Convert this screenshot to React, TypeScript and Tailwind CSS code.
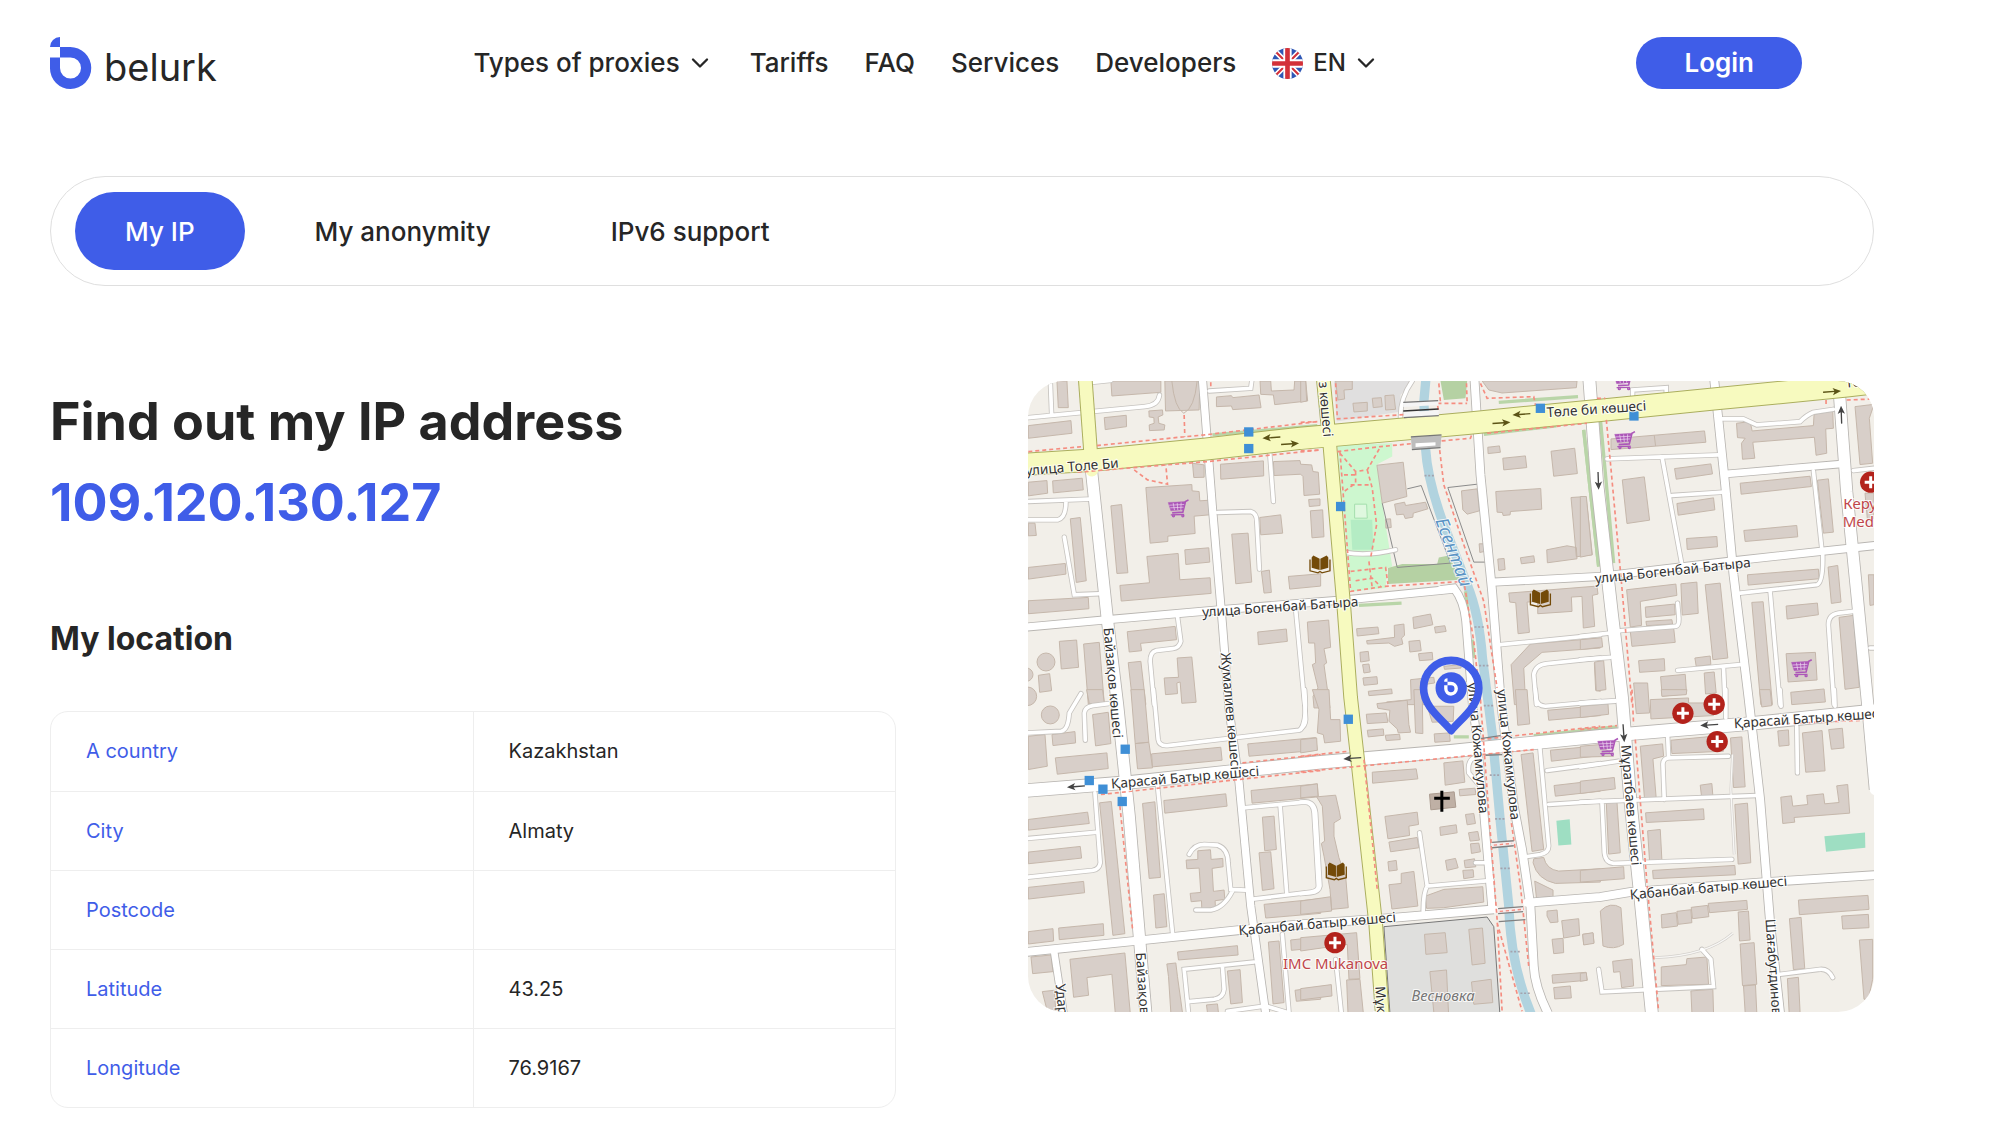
import { ReactNode } from 'react';
import { ChevronDown } from 'lucide-react';

const NAV_LINKS = ['Tariffs', 'FAQ', 'Services', 'Developers'];

const TABS = ['My IP', 'My anonymity', 'IPv6 support'];

const LOCATION = [
  { label: 'A country', value: 'Kazakhstan' },
  { label: 'City', value: 'Almaty' },
  { label: 'Postcode', value: '' },
  { label: 'Latitude', value: '43.25' },
  { label: 'Longitude', value: '76.9167' },
];

const LOGO_PATH =
  'M10 0V10H0A10 10 0 0 1 10 0ZM10 10H20A21 21 0 0 1 20.5 52A20.5 20.5 0 0 1 0 31.5V20.5H10V31A10.5 10.5 0 0 0 31 31A10.5 10.5 0 0 0 20.5 20.5H10Z';

// The map is split in six tiles, every shape uses its own tile's coordinates
const TILES = [
  {
    id: 'a',
    x: -21,
    y: -18,
    buildings:
      'M108 18L138 18L142 98L112 98Z M22 152L150 137L153 175L22 190Z M250 128L316 121L317 155L253 164Z M384 108L425 105L426 120L412 126L414 145L432 150L430 165L386 167L385 150L400 145L399 128L385 126Z M270 18L420 18L420 52L273 63Z M432 18L537 18L535 105L434 108Z M587 66L632 62L636 68L715 60L721 98L636 104L632 93L587 95Z M718 18L750 18L752 48L820 45L822 18L855 18L861 78L762 89L758 60L720 58Z M515 265L550 270L550 307L519 308Z M599 268L728 258L729 303L600 313Z M758 260L838 257L840 268L873 270L877 290L893 292L897 358L850 362L847 305L840 298L760 302Z M864 374L898 372L898 392L866 395Z M22 322L78 317L80 355L22 363Z M95 318L184 310L187 345L97 354Z M22 445L42 445L46 482L22 483Z M148 432L178 428L196 618L166 623Z M270 393L302 389L321 594L288 596Z M375 338L513 329L514 348L535 350L537 378L566 376L566 420L520 424L523 476L441 484L441 500L388 505Z M492 525L564 519L567 562L495 569Z M378 545L472 536L477 615L568 609L571 656L301 679L297 632L386 624Z M633 478L682 475L693 622L645 627Z M717 428L780 420L786 475L720 480Z M722 590L746 586L752 653L730 655Z M803 605L900 597L900 634L807 643Z M22 578L133 566L135 598L22 613Z M22 678L202 668L204 702L22 717Z M319 771L463 755L467 795L359 806L362 828L325 832Z M711 772L797 763L800 800L713 810Z M115 800L167 796L173 878L121 883Z M188 808L235 803L250 985L202 988Z M52 902L86 897L92 948L56 953Z M322 864L360 860L375 990L336 990Z M430 910L473 908L469 850L513 847L526 983L483 986L478 922L468 925L470 957L434 960Z M102 862A27 27 0 1 1 48 862A27 27 0 1 1 102 862Z M36 900A20 20 0 1 1 -4 900A20 20 0 1 1 36 900Z M47 965A28 28 0 1 1 -9 965A28 28 0 1 1 47 965Z',
    roads:
      'M22 128L370 95Q412 92 416 60 M88 18L92 120 M22 380L205 373 M22 435L110 435Q135 430 135 380 M130 487L160 660L235 657 M565 48L690 40L693 18 M747 235L758 380 M590 413L690 410Q708 415 708 440L716 583 M470 725L480 800Q475 820 455 822L405 828Q388 832 388 860L400 990 M825 705L852 990 M213 22L270 16',
    strips: 'M575 180L890 152',
    paths:
      'M22 230L185 215 M228 212L495 185L550 180L890 140 M170 292L560 260L900 225 M490 120L492 185 M340 285L380 315L440 328L435 270 M570 22V40',
  },
  {
    id: 'b',
    x: 819,
    y: -18,
    buildings:
      'M0 18L15 18L18 78L0 82Z M105 18L155 18L155 43L130 45L132 72L112 75Z M157 85L200 82L200 108L160 111Z M215 70L242 68L245 95L218 98Z M253 62L280 60L285 103L255 105Z M545 18L830 18L828 38L605 54L565 45Z M562 217L597 213L600 232L563 236Z M607 250L675 243L679 278L610 285Z M752 229L823 220L831 296L760 304Z M586 350L721 341L724 403L630 410L629 420L608 422L606 413L590 412Z M483 348L530 342L537 408L500 418L487 405Z M812 368L857 365L876 540L828 546Z M739 525L800 513L828 518L830 552L741 564Z M660 549L700 543L703 562L663 567Z M592 553L611 551L614 584L595 587Z M536 507L550 507L552 530L538 533Z M229 271L308 262L319 365L245 385Z M282 388L312 382L315 392L375 382L382 402L338 415L337 427L314 431L309 418L288 420Z M255 433L270 432L272 458L256 460Z M29 408L66 405L70 486L34 489Z M625 655L890 634L893 658L876 662L883 755L849 760L845 665L813 667L815 710L712 717L712 680L680 682L687 773L653 777L646 684L628 682Z M337 728L390 718L397 750L340 762Z M402 757L433 753L437 770L405 775Z M281 752L310 748L312 782L303 790L307 808L282 815L265 805L200 808L198 798L282 788Z M168 762L232 757L235 777L170 784Z M325 800L358 797L362 828L328 832Z M354 837L395 833L397 855L357 858Z M178 833L203 830L206 858L180 862Z M186 870L205 868L209 892L190 895Z M187 910L229 906L231 928L190 932Z M203 950L273 943L275 957L205 963Z M20 742L84 736L90 818L70 822L78 865L70 870L88 1000L40 1000L37 965L52 940L35 870L45 865L42 805L24 805Z M632 870L690 808L900 790L900 820L725 833L670 880L676 990L642 990Z M882 865L900 862L900 950L886 947Z M330 915L400 908L402 925L370 930L375 990L260 990L258 982L332 975Z M430 875L480 870L482 880L432 884Z',
    roads:
      'M300 130Q298 70 335 18 M135 533Q200 545 285 525 M600 810L900 780 M708 990L700 900Q705 870 740 867L900 850',
    strips:
      'M595 82L833 65 M550 178L768 153 M850 165L895 575 M175 692L303 685 M495 650L505 740 M515 795L520 850',
    paths:
      'M0 142L50 140 M108 132L415 112L410 85L500 85 M415 25L420 85 M498 25L500 85 M0 228L60 225 M110 230L240 215L510 190L515 175 M415 205L430 330L490 510L550 680L590 940 M105 25L110 130 M118 230L150 650L250 635L490 620L520 800L540 985 M118 235L165 290L200 285L240 215 M165 290L165 325L130 350 M200 285L215 340L228 450L210 550 M130 300L165 300 M150 330L210 330 M150 590L255 578L262 628 M165 618L215 610L240 635 M205 560L215 640 M540 25L560 70L700 65L705 90 M560 175L860 145',
  },
  {
    id: 'c',
    x: 1659,
    y: -18,
    buildings:
      'M0 365L18 365L35 540L0 547Z M92 192L373 168L377 202L92 224Z M222 181L226 213 M126 315L192 306L208 436L140 446Z M283 281L392 267L397 297L288 313Z M290 386L400 369L404 405L294 421Z M319 491L410 485L412 516L321 524Z M469 145L510 140L516 168L700 152L702 118L758 108L760 160L737 162L740 235L708 241L703 187L518 202L524 250L487 253L484 205L495 190L472 188Z M480 325L690 304L694 335L483 358Z M491 467L650 452L653 486L495 500Z M712 316L745 312L760 472L730 475Z M825 95L882 88L868 130L878 265L840 269Z M502 600L715 583L717 612L504 631Z M744 577L773 572L783 682L754 686Z M618 694L712 685L715 720L621 733Z M139 645L287 628L290 662L180 680L184 752L150 757Z M195 697L283 688L285 720L197 728Z M197 740L275 735L277 748L199 753Z M302 627L350 622L354 716L306 721Z M375 630L420 625L443 850L398 855Z M150 770L280 757L285 803L155 815Z M175 858L252 852L254 888L178 893Z M344 850L390 844L392 870L348 875Z M515 683L549 681L577 990L542 990Z M618 837L706 833L711 916L624 922Z M632 953L732 943L736 982L635 990Z M777 728L820 722L838 938L795 944Z M241 906L315 899L319 957L246 965Z M372 895L402 892L408 955L376 958Z M0 795L64 789L67 817L0 825Z M43 862L70 858L77 945L48 949Z M865 600L882 600L882 690L870 692Z M855 355L882 355L882 430L862 432Z',
    roads:
      'M157 60L157 45L258 38L258 55 M80 252L415 240 M245 245L305 570 M275 362L430 352 M425 132L490 132L530 150L660 140Q680 120 700 112L760 103 M700 288L725 520 M480 655L710 630Q730 625 728 540 M570 650L600 990 M118 768L285 755Q297 755 296 730L292 685 M292 887L480 870 M430 880L435 990 M820 710L775 715Q745 720 745 750L762 990 M0 785L115 772 M0 855L90 848 M820 287L882 280 M870 820L882 820 M0 985L105 978',
    strips: 'M10 165L55 575 M60 130L100 565',
    paths: 'M78 135L90 260L125 640L155 990 M800 75L880 72 M738 75V90 M50 70H75',
  },
  {
    id: 'd',
    x: -21,
    y: 927,
    buildings:
      'M22 140L72 135L79 230L22 240Z M93 135L162 126L164 160L96 168Z M103 205L258 190L262 237L109 254Z M197 0L245 0L250 40L205 42Z M215 75L262 68L270 162L224 169Z M330 0L370 0L384 158L343 162Z M343 162L384 158L395 235L350 238Z M392 193L600 173L604 212L395 232Z M681 163L885 144L890 182L685 200Z M22 390L200 368L205 402L22 422Z M22 488L178 471L182 506L22 523Z M22 594L188 576L191 610L22 629Z M22 727L96 718L98 755L22 764Z M113 716L247 703L249 738L115 751Z M236 340L271 336L312 733L276 738Z M365 342L402 337L419 564L385 567Z M398 617L430 613L438 712L405 716Z M429 333L615 313L619 350L432 371Z M691 303L890 283L893 322L694 341Z M725 383L760 380L767 480L732 484Z M715 490L750 487L760 598L725 603Z M531 484L569 481L571 510L606 507L607 532L574 537L578 606L610 602L612 630L583 634L584 655L543 658L542 634L511 637L508 612L540 609L535 536L498 538L496 512L531 510Z M730 645L900 628L900 672L735 686Z M30 803L90 797L96 847L35 853Z M147 810L312 791L328 970L283 970L273 855L198 865L203 918L158 924Z M64 907L100 903L105 970L80 970Z M470 788L650 769L652 797L473 812Z M438 824L465 821L470 862L485 970L450 970L443 862Z M620 845L658 841L665 940L630 944Z M743 758L775 755L790 940L757 944Z M810 752L900 742L900 775L812 783Z M823 903L900 893L900 930L827 936Z M557 947L590 944L593 970L560 970Z M115 76A27 27 0 1 1 61 76A27 27 0 1 1 115 76Z',
    roads:
      'M22 130L120 125Q142 122 145 70L180 12 M193 152L190 70Q192 52 215 48L262 42 M398 0L412 150Q415 170 440 168L835 122Q855 110 855 90L850 0 M222 310L238 520Q235 540 215 543L22 563 M22 447L230 428 M410 290L455 730 M668 355L850 338Q878 338 880 370L893 590Q893 605 870 608L690 630 M778 345L798 610 M505 495Q520 465 550 465L590 467Q622 478 622 520L630 600L675 602 M635 605Q610 655 570 662L525 662 M700 818L490 840L503 970 M605 832L610 900Q608 925 580 930L503 937 M785 735L805 970 M620 966L735 950L800 970',
    strips: '',
    paths: 'M240 315L900 243 M665 220L900 195 M297 350L335 720',
  },
  {
    id: 'e',
    x: 819,
    y: 927,
    buildings:
      'M197 74L257 70L262 98L200 102Z M229 42L320 32L325 105L330 128L293 130L290 118L265 95L268 62L232 56Z M200 122L248 118L250 137L203 142Z M254 137L297 134L299 150L257 153Z M340 0L365 0L367 132L345 130Z M380 50L460 50L458 95L395 98Z M401 133L447 130L449 155L403 158Z M0 150L48 145L50 182L0 190Z M35 0L85 0L90 90L118 90L120 155L72 160L68 135L50 130L55 60Z M645 0L680 0L688 103L652 107Z M742 62L900 48L900 78L745 92Z M215 248L347 238L352 268L216 281Z M430 220L487 214L493 278L434 287Z M476 300L524 296L526 315L478 319Z M253 381L350 368L354 405L325 410L327 438L262 448Z M265 458L350 444L355 475L270 487Z M495 375L520 372L525 402L500 406Z M418 413L467 406L470 430L420 438Z M504 430L532 426L537 452L509 455Z M510 463L535 461L540 487L513 492Z M491 513L522 508L526 532L494 535Z M435 513L465 507L473 535L440 543Z M487 543L518 541L520 563L490 568Z M262 517L287 513L290 542L265 545Z M265 586L302 582L302 552L340 546L352 650L274 659Z M375 620L430 600L547 592L550 638L430 655L378 657Z M662 195L698 190L730 480L695 486Z M750 182L900 168L900 198L753 215Z M761 288L900 272L900 305L765 320Z M700 508L730 504Q738 540 775 545L900 538L900 578L765 582Q710 570 698 520Z M703 575L758 602L758 622L708 625Z M740 665L770 662L773 698L750 700L740 680Z M784 694L835 688L838 738L790 746Z M755 750L788 747L790 790L760 793Z M847 735L878 731L881 760L850 765Z M755 857L857 849L861 873L757 882Z M760 895L810 890L813 926L763 929Z M48 322L105 317L117 370L120 388L100 400L100 440L115 505L135 560L143 655L93 660L88 600L70 500L62 462L72 455L65 350Z M0 635L90 622L93 665L0 675Z M0 290L50 283L52 320L0 325Z M0 745L168 730L178 868L145 870L140 765L0 785Z M0 898L92 886L94 920L0 932Z M138 872L178 870L188 970L142 970Z M372 735L434 730L440 790L376 795Z M505 720L546 716L554 822L515 827Z M388 847L438 842L444 970L400 970Z M513 878L572 870L577 940L520 945Z',
    roads:
      'M357 430L380 590L575 573 M380 590Q368 610 368 665 M525 520L560 520 M740 243L900 222 M745 345L900 335 M718 170L745 470Q745 490 720 495L675 502 M705 0L708 30Q712 48 735 50L900 35 M0 338Q40 330 45 370L58 590Q55 608 30 610L0 613 M520 205Q500 215 505 250L530 280 M105 810L122 970 M0 120Q20 90 12 0',
    strips: 'M460 142L505 142 M700 138L900 118',
    paths:
      'M0 200L145 185 M0 247L700 180 M190 210L230 600 M540 30L565 370L590 690L605 966 M630 380L660 590L685 830 M590 700L665 966 M540 150L900 110',
  },
  {
    id: 'f',
    x: 1659,
    y: 927,
    buildings:
      'M0 50L83 43L85 74L0 84Z M0 170L60 165L100 200L0 203Z M0 275L102 264L105 298L0 312Z M78 341L110 337L120 490L85 494Z M0 543L130 532L132 568L0 578Z M180 170L247 163L250 200L218 208L228 328L193 331Z M272 152L420 138L430 185L275 192Z M451 145L485 142L495 292L460 294Z M360 287L395 282L398 318L364 321Z M464 345L502 341L512 520L474 524Z M196 370L370 358L372 390L198 399Z M202 424L240 420L245 513L208 518Z M217 543L464 528L466 556L219 568Z M593 124L625 121L627 167L597 170Z M667 130L726 123L735 244L677 248Z M746 120L787 116L792 175L754 179Z M602 323L634 319L638 350L683 345L680 318L730 313L734 343L777 339L770 289L803 285L809 371L642 384L644 398L608 402Z M655 632L864 618L867 660L658 676Z M785 680L865 675L867 715L788 719Z M60 665Q90 635 122 655L130 765Q100 783 68 770Z M7 735L38 730L41 762L10 767Z M97 816L155 809L160 890L124 895L119 847L100 849Z M0 852L18 850L20 873L0 876Z M243 676L288 670L292 710L245 716Z M290 666L332 661L335 700L294 705Z M333 654L382 648L386 682L337 688Z M384 642L500 633L502 660L388 670Z M474 668L505 665L510 752L478 755Z M480 764L522 760L530 885L487 889Z M490 890L526 887L530 970L495 970Z M243 833L318 826L320 808L380 803L385 885L243 889Z M332 905L398 900L400 970L335 970Z M628 688L663 684L674 838L640 841Z M622 868L655 864L660 970L627 970Z M838 752L878 750L878 870L865 930L852 930Z M160 -20L202 -20L208 70L168 72Z M210 30L325 25L325 40L395 40L400 78L212 88Z M243 0L320 0L318 15L245 20Z M538 0L570 0L575 48L545 52Z',
    roads:
      'M0 42L105 35 M0 232L115 215 M0 338L530 318 M262 135L265 200 M445 200L265 205Q248 207 248 225L252 330 M65 340L72 490Q75 520 100 522L455 510 M650 110L652 250 M437 0L437 85 M600 0L603 50 M763 0L765 50 M55 840L65 908L400 892L392 810L365 780 M600 855L720 840Q745 838 758 865',
    strips: 'M0 122L110 112',
    paths: 'M155 0L160 105 M165 150L200 580L235 966 M0 120L110 108 M555 105L850 92',
  },
];

const STREETS = [
  { d: 'M191 272L239 722L269 972L304 1307L336 1687L354 1900', width: 34 },
  { d: 'M524 -5L554 382L584 732L604 987L634 1207L669 1577L714 1900', width: 22 },
  { d: 'M1341 -5L1359 282L1394 632L1419 950L1459 1277L1484 1407L1509 1577L1519 1757Q1522 1820 1562 1900', width: 24 },
  { d: 'M1240 627L1279 622Q1309 660 1315 720L1335 972L1349 1077L1369 1297L1394 1587', width: 22 },
  { d: 'M1686 -5L1709 302L1754 702L1784 950L1809 1257L1839 1547L1874 1900', width: 36 },
  { d: 'M2061 -5L2094 312L2119 582L2164 950L2199 1257L2229 1627L2259 1900', width: 24 },
  { d: 'M2434 -5L2459 332L2489 632L2521 960L2545 1227', width: 34 },
  { d: 'M-5 739L259 715L579 687L979 655L1279 625', width: 22 },
  { d: 'M1399 604L1719 587L2119 540L2545 494', width: 22 },
  { d: 'M2099 279L2434 250', width: 20 },
  { d: 'M-5 1230L309 1205L639 1170L879 1145L1269 1112L1719 1067L2159 1030L2545 990', width: 38 },
  { d: 'M-5 1715L319 1682L629 1650L819 1632L1099 1612L1399 1587', width: 24 },
  { d: 'M1499 1567L1719 1550L1809 1535L2219 1505L2545 1484', width: 24 },
  { d: 'M79 1717L107 1900', width: 20 },
];

const AVENUES = [
  { d: 'M172 -5L192 268', width: 38 },
  { d: 'M887 -5L907 197L949 682L969 950L989 1127L1044 1627L1064 1900', width: 38 },
  { d: 'M-5 250L192 238L529 205L819 172L1319 127L1719 88L2059 54L2459 15L2545 5', width: 64 },
];

const RIVER =
  'M1195 -5L1189 62L1194 202Q1200 300 1249 432L1319 612Q1355 700 1365 832L1394 1057L1419 1327L1444 1577Q1450 1760 1515 1910';

const STREET_LABELS = [
  { text: 'улица Толе Би', x: -6, y: 284, angle: -5 },
  { text: 'улица Богенбай Батыра', x: 524, y: 709, angle: -4 },
  { text: 'улица Богенбай Батыра', x: 1704, y: 608, angle: -6 },
  { text: 'Төле би көшесі', x: 1559, y: 109, angle: -4 },
  { text: 'Төле би', x: 2456, y: 20, angle: -5 },
  { text: 'Қарасай Батыр көшесі', x: 251, y: 1224, angle: -5 },
  { text: 'Қарасай Батыр көшесі', x: 2121, y: 1043, angle: -4 },
  { text: 'Қабанбай батыр көшесі', x: 634, y: 1665, angle: -5 },
  { text: 'Қабанбай батыр көшесі', x: 1809, y: 1557, angle: -5 },
  { text: 'Байзақов көшесі', x: 227, y: 742, angle: 85 },
  { text: 'Байзақов көшесі', x: 324, y: 1717, angle: 86 },
  { text: 'Жумалиев көшесі', x: 579, y: 817, angle: 85 },
  { text: 'з көшесі', x: 873, y: 3, angle: 85 },
  { text: 'Мұқанов', x: 1043, y: 1819, angle: 86 },
  { text: 'улица Кожамкулова', x: 1321, y: 907, angle: 85 },
  { text: 'улица Кожамкулова', x: 1409, y: 927, angle: 84 },
  { text: 'Мұратбаев көшесі', x: 1781, y: 1094, angle: 85 },
  { text: 'Шағабутдинов', x: 2215, y: 1617, angle: 86 },
  { text: 'Удар', x: 83, y: 1812, angle: 85 },
];

const BUS_STOPS = [
  [663, 153], [663, 203], [939, 377], [1539, 82], [1820, 105],
  [292, 1106], [184, 1200], [225, 1226], [283, 1263], [962, 1016],
];

// Direction arrows: tip position and heading
const ARROWS = [
  { x: 704, y: 172, angle: 176, color: '#5b5316' },
  { x: 814, y: 187, angle: -4, color: '#5b5316' },
  { x: 1449, y: 124, angle: -4, color: '#5b5316' },
  { x: 1455, y: 102, angle: 176, color: '#5b5316' },
  { x: 2442, y: 30, angle: -4, color: '#5b5316' },
  { x: 1714, y: 327, angle: 88, color: '#444' },
  { x: 2442, y: 74, angle: -92, color: '#444' },
  { x: 117, y: 1220, angle: 176, color: '#444' },
  { x: 947, y: 1135, angle: 176, color: '#444' },
  { x: 2019, y: 1035, angle: 176, color: '#444' },
  { x: 1791, y: 1085, angle: 86, color: '#444' },
];

const SHOPS = [
  [451, 382], [1792, 177], [1790, 0], [2323, 862], [1741, 1099],
];

const LIBRARIES = [
  [877, 550], [1539, 652], [926, 1472],
];

const HOSPITALS = [
  [2531, 304], [2061, 971], [1967, 998], [2070, 1083], [922, 1687],
];

function Logo() {
  return (
    <a href="#" className="flex items-center gap-3" aria-label="belurk">
      <svg width="42" height="52" viewBox="0 0 42 52" fill="#3f5de8">
        <path d={LOGO_PATH} />
      </svg>
      <span className="pt-2 text-[38px] leading-10 text-[#262626]">belurk</span>
    </a>
  );
}

function UkFlag() {
  return (
    <svg width="31" height="31" viewBox="0 0 60 60">
      <clipPath id="flag-circle">
        <circle cx="30" cy="30" r="30" />
      </clipPath>
      <g clipPath="url(#flag-circle)">
        <rect width="60" height="60" fill="#2f57b5" />
        <path d="M0 0L60 60M60 0L0 60" stroke="#fff" strokeWidth="10" />
        <path d="M0 0L60 60M60 0L0 60" stroke="#d33139" strokeWidth="4" />
        <path d="M30 0V60M0 30H60" stroke="#fff" strokeWidth="16" />
        <path d="M30 0V60M0 30H60" stroke="#d33139" strokeWidth="9" />
      </g>
    </svg>
  );
}

function Tile({ x, y, children }: { x: number; y: number; children: ReactNode }) {
  return <g transform={`translate(${x} ${y})`}>{children}</g>;
}

function LocationMap() {
  return (
    <svg
      className="block h-auto w-full rounded-[36px]"
      viewBox="0 0 2541 1896"
      role="img"
      aria-label="Map of Almaty"
      fontFamily="'Noto Sans', sans-serif"
    >
      <rect width="2541" height="1896" fill="#f2efe9" />

      {/* Parks and land use */}
      <Tile x={819} y={-18}>
        <path d="M100 18L335 18L300 60L298 110L108 140Z" fill="#e0dfdf" />
        <path d="M110 210L275 205L275 245L230 268L245 385L275 575L260 580L255 640L150 650Z" fill="#cdf7cf" />
        <path d="M150 435H215L218 525H155Z" fill="#b4ecc4" />
        <path d="M162 388H198L200 430H162Z" fill="#dff8df" stroke="#a5dfae" strokeWidth="3" />
        <path d="M262 580L305 568L410 568L415 548L445 542L480 615L262 628Z M420 18L500 18L495 70L430 75Z" fill="#b5d1a3" />
      </Tile>
      <Tile x={819} y={927}>
        <path d="M250 712L560 683L580 712L598 970L268 970Z" fill="#dfdfdd" stroke="#777" strokeWidth="3" />
        <path d="M768 394L808 389L813 465L774 468Z" fill="#9edec2" />
      </Tile>
      <Tile x={1659} y={927}>
        <path d="M733 440L855 429L856 475L738 487Z" fill="#9edec2" />
      </Tile>

      <path d={RIVER} fill="none" stroke="#b1d3df" strokeWidth="28" />

      {TILES.map((tile) => (
        <Tile key={tile.id} x={tile.x} y={tile.y}>
          <path d={tile.buildings} fill="#d8cfc9" stroke="#c5b7ab" strokeWidth="3" />
          <path d={tile.strips} fill="none" stroke="#b9d5a8" strokeWidth="10" />
        </Tile>
      ))}
      <path d="M432 0Q440 82 468 97Q500 82 508 0" fill="none" stroke="#c5b7ab" strokeWidth="3" />

      {/* Fences */}
      <Tile x={819} y={-18}>
        <path
          d="M320 342L362 332L450 565L290 578L245 385 M530 328L442 338L520 562L555 562"
          fill="none"
          stroke="#8b8b8b"
          strokeWidth="3"
        />
      </Tile>

      {/* Road outlines first, then the fills, so that crossings stay open */}
      <g fill="none" stroke="#c6c3bf" strokeLinecap="round">
        {TILES.map((tile) => (
          <Tile key={tile.id} x={tile.x} y={tile.y}>
            <path d={tile.roads} strokeWidth="16" />
          </Tile>
        ))}
      </g>
      <g fill="none" stroke="#b8b5b1">
        {STREETS.map((street) => (
          <path key={street.d} d={street.d} strokeWidth={street.width + 5} />
        ))}
      </g>
      <Tile x={1659} y={927}>
        <path d="M457 195L452 300L462 495 M225 805Q380 800 458 732" fill="none" stroke="#d2cfcb" strokeWidth="8" />
        <path d="M457 195L452 300L462 495 M225 805Q380 800 458 732" fill="none" stroke="#f8f7f5" strokeWidth="4" />
      </Tile>
      <g fill="none" stroke="#fff" strokeLinecap="round">
        {TILES.map((tile) => (
          <Tile key={tile.id} x={tile.x} y={tile.y}>
            <path d={tile.roads} strokeWidth="11" />
          </Tile>
        ))}
        {STREETS.map((street) => (
          <path key={street.d} d={street.d} strokeWidth={street.width} />
        ))}
      </g>
      <g fill="none">
        {AVENUES.map((avenue) => (
          <path key={avenue.d} d={avenue.d} stroke="#abae5e" strokeWidth={avenue.width + 6} />
        ))}
        {AVENUES.map((avenue) => (
          <path key={avenue.d} d={avenue.d} stroke="#f7fabf" strokeWidth={avenue.width} strokeLinecap="round" />
        ))}
      </g>

      {/* Footpaths */}
      <g fill="none" stroke="#f58d80" strokeWidth="5" strokeDasharray="12 9">
        {TILES.map((tile) => (
          <Tile key={tile.id} x={tile.x} y={tile.y}>
            <path d={tile.paths} />
          </Tile>
        ))}
      </g>

      {/* Bridges */}
      <Tile x={819} y={-18}>
        <path d="M331 186L423 180L420 218L334 224Z" fill="#bdbdbd" />
        <path d="M345 205L405 202L405 212L345 216Z" fill="#fff" />
        <path d="M308 96L414 90V76L308 82Z M310 128L415 122V106L310 112Z" fill="#f5f5f5" />
        <path d="M308 82L413 77 M310 128L415 122 M331 186L423 180 M334 224L420 218" stroke="#777" strokeWidth="4" />
        <path d="M308 108L414 102" stroke="#333" strokeWidth="5" />
        <path d="M372 302H400 M522 757H550 M536 873H566" stroke="#a3a3ae" strokeWidth="5" strokeDasharray="6 5" />
      </Tile>
      <Tile x={819} y={927}>
        <path d="M575 459L640 454L640 468L575 475Z M593 658L668 652L668 667L593 673Z" fill="#f5eeee" />
        <path
          d="M540 147L600 138 M555 197L605 195 M575 459L640 454 M575 475L640 469 M593 658L668 652 M593 673L668 667 M595 697L675 691"
          stroke="#808080"
          strokeWidth="4"
        />
        <path d="M580 467L635 462 M598 666L665 660" stroke="#f58d80" strokeWidth="4" strokeDasharray="10 8" />
        <path
          d="M550 48H578 M568 257H596 M584 388H612 M600 537H630 M630 787H658 M660 912H688"
          stroke="#a3a3ae"
          strokeWidth="5"
          strokeDasharray="6 5"
        />
        <path d="M387 314L461 307L466 353L391 361Z" fill="#bfb0a5" stroke="#ab9b8f" strokeWidth="3" />
        <path d="M424 304V367M401 326H448" stroke="#000" strokeWidth="9" />
      </Tile>

      {ARROWS.map((arrow) => (
        <g
          key={`${arrow.x}-${arrow.y}`}
          transform={`translate(${arrow.x} ${arrow.y}) rotate(${arrow.angle})`}
          fill={arrow.color}
        >
          <path d="M0 0L-25 -11L-20 -2H-54V2H-20L-25 11Z" />
        </g>
      ))}

      {BUS_STOPS.map(([x, y]) => (
        <rect key={`${x}-${y}`} x={x - 14} y={y - 14} width="28" height="28" fill="#3f8fd6" />
      ))}

      {/* Labels */}
      <g fontSize="41" fill="#333" stroke="#fff" strokeOpacity="0.8" strokeWidth="6" paintOrder="stroke">
        {STREET_LABELS.map((label) => (
          <text
            key={`${label.x}-${label.y}`}
            transform={`translate(${label.x} ${label.y}) rotate(${label.angle})`}
          >
            {label.text}
          </text>
        ))}
        <text transform="translate(1223 420) rotate(69)" fontSize="54" fontStyle="italic" fill="#5b93c4">
          Есентай
        </text>
        <text x="924" y="1766" textAnchor="middle" fontSize="45" fill="#c0464a">
          IMC Mukanova
        </text>
        <text x="2449" y="385" fontSize="45" fill="#c0464a">
          Керуен
        </text>
        <text x="2447" y="439" fontSize="45" fill="#c0464a">
          Medicus
        </text>
        <text x="1152" y="1862" fontSize="45" fontStyle="italic" fill="#777">
          Весновка
        </text>
      </g>

      {/* Points of interest */}
      {SHOPS.map(([x, y]) => (
        <g key={`${x}-${y}`} transform={`translate(${x} ${y})`} stroke="#ac57b8" fill="none">
          <path d="M31 -25L22 -20L14 12L-18 14" strokeWidth="5" />
          <path d="M-30 -17L22 -20L15 5L-22 8Z" fill="#ac57b8" />
          <path d="M-27 -9L18 -11M-24 -1L16 -3M-15 -16L-11 6M-3 -16L-1 6M9 -17L8 5" stroke="#efdcf1" strokeWidth="2" />
          <path d="M-22 20L18 19" strokeWidth="4" />
          <circle cx="-14" cy="23" r="3" strokeWidth="4" />
          <circle cx="14" cy="23" r="3" strokeWidth="4" />
        </g>
      ))}
      {LIBRARIES.map(([x, y]) => (
        <g key={`${x}-${y}`} transform={`translate(${x} ${y})`}>
          <path d="M-30 -14V20L-6 26L0 22L6 26L30 20V-14" fill="none" stroke="#734a08" strokeWidth="4" />
          <path d="M-25 -20L-20 -26L-1 -16V18L-25 11Z M25 -20L20 -26L1 -16V18L25 11Z" fill="#734a08" />
        </g>
      ))}
      {HOSPITALS.map(([x, y]) => (
        <g key={`${x}-${y}`} transform={`translate(${x} ${y})`}>
          <circle r="32" fill="#b3221b" />
          <path d="M0 -18V18M-18 0H18" stroke="#fff" strokeWidth="9" />
        </g>
      ))}

      {/* Current position */}
      <path
        d="M1271 1050C1244 1016 1188 980 1188 922A83 83 0 0 1 1354 922C1354 980 1298 1016 1271 1050Z"
        fill="none"
        stroke="#3f5de8"
        strokeWidth="23"
        strokeLinejoin="round"
      />
      <circle cx="1271" cy="922" r="47" fill="#3f5de8" />
      <path d={LOGO_PATH} transform="translate(1250 893)" fill="#fff" />
    </svg>
  );
}

export default function App() {
  return (
    <div className="min-h-screen bg-white pr-[125px] pb-5 pl-[50px] font-['Inter',sans-serif] text-[#262626]">
      {/* Header */}
      <header className="flex items-center justify-between pt-[37px] pr-[72px]">
        <Logo />
        <nav className="flex items-center gap-9 text-[26px] leading-[52px] font-medium">
          <button type="button" className="flex items-center gap-1.5">
            Types of proxies
            <ChevronDown size={28} />
          </button>
          {NAV_LINKS.map((link) => (
            <a key={link} href="#">
              {link}
            </a>
          ))}
          <button type="button" className="flex items-center gap-1.5 text-2xl">
            <span className="flex items-center gap-2.5">
              <UkFlag />
              EN
            </span>
            <ChevronDown size={28} />
          </button>
        </nav>
        <a href="#" className="rounded-full bg-[#3f5de8] px-12 text-[26px] leading-[52px] font-semibold text-white">
          Login
        </a>
      </header>

      {/* Tabs */}
      <div className="mt-[87px] flex gap-5 rounded-full border border-[#dfdfdf] px-6 py-[15px]">
        {TABS.map((tab, index) => (
          <button
            key={tab}
            type="button"
            className={
              index === 0
                ? 'h-[78px] rounded-full bg-[#3f5de8] px-[50px] text-[26px] font-medium text-white'
                : 'h-[78px] rounded-full px-[50px] text-[26px] font-medium'
            }
          >
            {tab}
          </button>
        ))}
      </div>

      <main className="mt-[95px] grid grid-cols-2 items-start gap-[132px]">
        <section>
          <h1 className="text-[52px] leading-[81px] font-bold">
            Find out my IP address
            <span className="block text-[#3f5de8]">109.120.130.127</span>
          </h1>
          <h2 className="mt-[72px] text-[32px] leading-[48px] font-bold">My location</h2>

          <div className="mt-12 overflow-hidden rounded-[18px] border border-[#eee]">
            <table className="w-full table-fixed text-left text-xl">
              <tbody className="divide-y divide-[#eee]">
                {LOCATION.map((row) => (
                  <tr key={row.label} className="h-[79px]">
                    <th scope="row" className="border-r border-[#eee] px-[35px] font-normal text-[#3f5de8]">
                      {row.label}
                    </th>
                    <td className="px-[35px]">{row.value}</td>
                  </tr>
                ))}
              </tbody>
            </table>
          </div>
        </section>

        <LocationMap />
      </main>
    </div>
  );
}
